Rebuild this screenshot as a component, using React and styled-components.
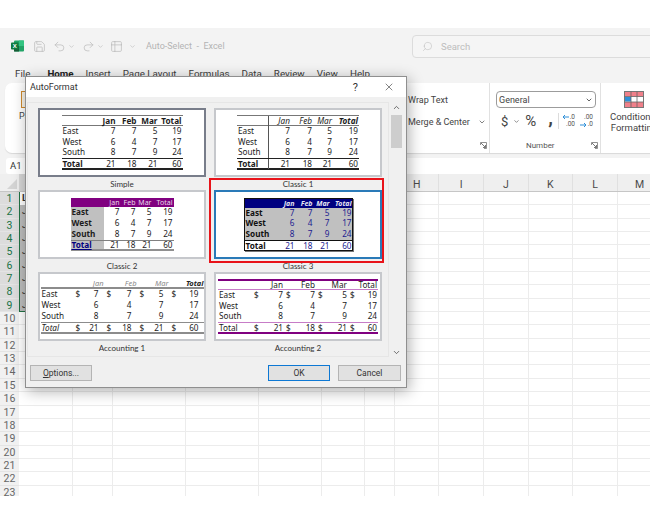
import styled, { createGlobalStyle, css } from 'styled-components';
import { Save, Undo2, Redo2, Table2, ChevronDown, ChevronUp, X, Search } from 'lucide-react';

const GlobalStyle = createGlobalStyle`
  html, body {
    margin: 0;
    padding: 0;
    background: #fff;
  }
  * {
    box-sizing: border-box;
  }
`;

const UI_FONT = `Roboto, "Open Sans", sans-serif`;

const Page = styled.div`
  position: relative;
  width: 650px;
  height: 524px;
  padding: 28px 0;
  overflow: hidden;
  font-family: ${UI_FONT};
  color: #333;
`;

const ExcelWindow = styled.div`
  height: 468px;
  background: #f3f3f3;
  display: flex;
  flex-direction: column;
  overflow: hidden;
`;

const TitleBar = styled.div`
  height: 36px;
  flex: none;
  display: flex;
  align-items: center;
  padding-left: 11px;
  color: #b9b9b9;
`;

const QuickIcon = styled.span`
  display: inline-flex;
  margin-left: ${(p) => p.$gap || 0}px;
`;

const DocTitle = styled.span`
  margin-left: 10px;
  font-size: 9px;
  color: #b4b4b4;
  white-space: pre;
`;

const SearchBox = styled.div`
  margin-left: auto;
  margin-right: -4px;
  width: 242px;
  height: 23px;
  border: 1px solid #dcdcdc;
  border-radius: 4px;
  display: flex;
  align-items: center;
  gap: 8px;
  padding-left: 9px;
  font-size: 9.5px;
  color: #bdbdbd;
  background: #f5f5f5;
`;

const SearchGlass = styled(Search)`
  transform: scaleX(-1);
`;

const TabRow = styled.div`
  height: 19px;
  flex: none;
  display: flex;
  align-items: center;
  gap: 12px;
  padding: 0 0 1px 15px;
  font-size: 9.8px;
`;

const Tab = styled.span`
  margin-left: ${(p) => (p.$active ? 5 : 0)}px;
  font-weight: ${(p) => (p.$active ? 700 : 400)};
  color: ${(p) => (p.$active ? '#222' : '#3c3c3c')};
  white-space: nowrap;
`;

const Ribbon = styled.div`
  height: 70px;
  flex: none;
  margin-left: 5px;
  margin-right: -12px;
  background: #fff;
  border-radius: 7px;
  display: grid;
  grid-template-columns: 396px 89px 111px 61px;
  box-shadow: 0 1px 1px #d9d9d9;
`;

const RibbonGroup = styled.div`
  display: flex;
  flex-direction: column;
  padding: 8px 2px 2px 7px;
  border-right: ${(p) => (p.$last ? 'none' : '1px solid #e1e1e1')};
  font-size: 9px;
  color: #444;
`;

const PasteButton = styled.div`
  display: flex;
  flex-direction: column;
  align-items: flex-start;
  gap: 3px;
  padding-left: 7px;
`;

const ClipboardShape = styled.div`
  width: 14px;
  height: 17px;
  margin-left: 2px;
  border: 1.5px solid #d08a2e;
  background: #f7f2e8;
`;

const CommandRow = styled.div`
  height: 18px;
  display: flex;
  align-items: center;
  gap: ${(p) => p.$gap || 0}px;
  margin-bottom: 4px;
  white-space: nowrap;
`;

const NumberRow = styled.div`
  height: 18px;
  margin-top: 4px;
  display: flex;
  align-items: center;
`;

const GroupFooter = styled.div`
  margin-top: auto;
  height: 12px;
  display: flex;
  align-items: center;
  justify-content: ${(p) => (p.$label ? 'space-between' : 'flex-end')};
  font-size: 8px;
  color: #555;
`;

const GroupLabel = styled.span`
  margin-left: 29px;
`;

const Combo = styled.div`
  width: 100px;
  height: 17px;
  margin-left: -1px;
  border: 1px solid #9c9c9c;
  border-radius: 4px;
  display: flex;
  align-items: center;
  justify-content: space-between;
  padding: 0 2px;
  font-size: 9px;
`;

const NumberButton = styled.span`
  margin-left: ${(p) => p.$ml || 0}px;
  font-size: ${(p) => p.$size || 12}px;
  font-weight: ${(p) => p.$weight || 400};
  color: #444;
  line-height: 1;
`;

const CommaButton = styled(NumberButton)`
  transform: translateY(-4px);
`;

const NumberChevron = styled(ChevronDown)`
  margin-left: 5px;
`;

const NumberDivider = styled.span`
  width: 1px;
  height: 16px;
  margin-left: 5px;
  background: #dcdcdc;
`;

const DecimalButton = styled.span`
  width: 12px;
  margin-left: ${(p) => p.$ml}px;
  display: flex;
  flex-direction: column;
  align-items: flex-end;
  font-size: 6.5px;
  line-height: 7.5px;
  color: #555;
`;

const DecimalLine = styled.span`
  display: flex;
  align-items: center;
  gap: 1px;
`;

const StylesLabel = styled.div`
  margin-top: 3px;
  text-align: center;
  font-size: 9.5px;
  line-height: 11px;
  white-space: nowrap;
`;

const StylesIcon = styled.div`
  display: flex;
  justify-content: center;
`;

const FormulaRow = styled.div`
  height: 16px;
  flex: none;
  margin-top: 5px;
  display: flex;
  gap: 4px;
  padding-left: 6px;
`;

const NameBox = styled.div`
  width: 80px;
  background: #fff;
  border-radius: 3px;
  font-size: 9.5px;
  line-height: 16px;
  padding-left: 4px;
`;

const FormulaInput = styled.div`
  flex: 1;
  background: #fff;
`;

const COLUMN_TRACKS = '19px 54px 40px 73px 73px 63px 43px 30px 44.4px 44.6px 44.6px 44.6px 44.6px 44.6px';

const ColumnHeader = styled.div`
  height: 18px;
  flex: none;
  display: grid;
  grid-template-columns: ${COLUMN_TRACKS};
  background: #efefef;
  border-bottom: 1px solid #c6c6c6;
`;

const CornerCell = styled.div`
  display: flex;
  align-items: flex-end;
  justify-content: flex-end;
  padding: 0 2px 2px 0;
  &::after {
    content: '';
    border-left: 10px solid transparent;
    border-bottom: 10px solid #d4d4d4;
  }
`;

const ColumnCell = styled.div`
  border-right: 1px solid #e0e0e0;
  background: ${(p) => (p.$selected ? '#d6d6d6' : 'transparent')};
  font-size: 10.5px;
  line-height: 10px;
  padding-top: 6px;
  text-align: center;
  color: #4a4a4a;
`;

const SheetGrid = styled.div`
  flex: 1;
  min-height: 0;
  overflow: hidden;
  display: grid;
  grid-template-columns: ${COLUMN_TRACKS};
  grid-auto-rows: 13.35px;
  background: #fff;
`;

const RowHeader = styled.div`
  background: ${(p) => (p.$selected ? '#dcdcdc' : '#f1f1f1')};
  color: ${(p) => (p.$selected ? '#217346' : '#666')};
  font-size: 10.5px;
  line-height: 13px;
  text-align: center;
  border-bottom: 1px solid #e4e4e4;
`;

const SheetCell = styled.div`
  border-right: 1px solid #ececec;
  border-bottom: 1px solid #ececec;
  font-size: 9.5px;
  line-height: 12px;
  padding-left: 2px;
  color: #333;
  ${(p) =>
    p.$selected &&
    css`
      background: ${p.$active ? '#fff' : '#bdbdbd'};
      border-left: 1px solid #217346;
      border-bottom: ${p.$end ? '1.5px solid #217346' : 'none'};
      font-weight: ${p.$active ? 700 : 400};
    `}
`;

const Dialog = styled.div`
  position: absolute;
  left: 25px;
  top: 76px;
  width: 382px;
  height: 312px;
  background: #f0f0f0;
  border: 1px solid #8f8f8f;
  box-shadow: 2px 3px 14px rgba(0, 0, 0, 0.32);
  display: flex;
  flex-direction: column;
`;

const DialogTitle = styled.div`
  height: 20px;
  flex: none;
  background: #fff;
  display: flex;
  align-items: center;
  padding: 0 11px 0 4px;
  font-size: 9px;
  color: #333;
`;

const DialogHelp = styled.span`
  margin-left: auto;
  margin-right: 25px;
  font-size: 11px;
`;

const DialogBody = styled.div`
  display: flex;
  padding: 5px 3px 0 1px;
`;

const FormatList = styled.div`
  width: 362px;
  height: 255px;
  border: 1px solid #e6e6e6;
  padding: 5px 0 0 10px;
  display: grid;
  grid-template-columns: 168px 168px;
  grid-auto-rows: 82px;
  column-gap: 8px;
`;

const FormatItem = styled.div`
  position: relative;
`;

const previewBorders = {
  selected: '#787d8a',
  focused: '#2a7ab8',
  normal: '#c6c8cc',
};

const PreviewBox = styled.div`
  height: 69px;
  background: #fff;
  border: 2px solid ${(p) => previewBorders[p.$state || 'normal']};
  display: flex;
  align-items: center;
  justify-content: center;
`;

const FormatName = styled.div`
  height: 13px;
  font-family: Lato, ${UI_FONT};
  font-size: 8px;
  line-height: 15px;
  text-align: center;
  color: #333;
`;

const RedMarker = styled.div`
  position: absolute;
  left: -5px;
  top: -12px;
  width: 175px;
  height: 85px;
  border: 2px solid #e8131a;
  pointer-events: none;
`;

const Scrollbar = styled.div`
  width: 14px;
  height: 255px;
  display: flex;
  flex-direction: column;
  align-items: center;
  color: #444;
  padding-top: 1px;
`;

const ScrollThumb = styled.div`
  width: 11px;
  height: 33px;
  margin-top: 3px;
  margin-bottom: auto;
  background: #cdcdcd;
`;

const DialogFooter = styled.div`
  display: flex;
  justify-content: space-between;
  padding: 8px 5px 0 4px;
`;

const FooterRight = styled.div`
  display: flex;
  gap: 8px;
`;

const DialogButton = styled.button`
  width: ${(p) => (p.$wide ? 63 : 62)}px;
  height: 16px;
  padding: 0;
  background: #e1e1e1;
  border: ${(p) => (p.$primary ? '1.5px solid #0d78d4' : '1px solid #b4b4b4')};
  font-family: ${UI_FONT};
  font-size: 8.5px;
  line-height: 13px;
  color: #333;
`;

const Underlined = styled.span`
  text-decoration: underline;
`;

const MiniTable = styled.div`
  width: ${(p) => p.$width}px;
  font-family: "Noto Sans", "Liberation Sans", sans-serif;
  font-size: 8.2px;
  color: #1c1c1c;
`;

const rowLooks = {
  simple: {
    head: css`
      font-weight: 700;
      border-top: 1px solid #777;
      border-bottom: 1px solid #777;
      height: 11px;
    `,
    body: css``,
    total: css`
      border-top: 1px solid #222;
      border-bottom: 2px solid #222;
      height: 12px;
      > :first-child {
        font-weight: 700;
      }
    `,
  },
  classic1: {
    head: css`
      font-style: italic;
      border-top: 1px solid #777;
      border-bottom: 1px solid #777;
      height: 11px;
      > :last-child {
        font-weight: 700;
      }
      > :first-child {
        border-right: 1px solid #555;
      }
    `,
    body: css`
      > :first-child {
        border-right: 1px solid #555;
      }
    `,
    total: css`
      border-top: 1px solid #222;
      border-bottom: 2px solid #222;
      height: 12px;
      > :first-child {
        font-weight: 700;
        border-right: 1px solid #555;
      }
    `,
  },
  classic2: {
    head: css`
      background: #800080;
      color: #e8d8e8;
      font-size: 7px;
      line-height: 9px;
      height: 9px;
    `,
    body: css`
      > :first-child {
        background: #c0c0c0;
        font-weight: 700;
      }
    `,
    total: css`
      border-top: 1.5px solid #808080;
      border-bottom: 2px solid #909090;
      height: 11px;
      line-height: 8px;
      > :first-child {
        background: #c0c0c0;
        color: #000080;
        font-weight: 700;
        text-decoration: underline;
      }
    `,
  },
  classic3: {
    head: css`
      background: #000080;
      color: #e6e6f5;
      font-size: 7px;
      line-height: 9px;
      font-style: italic;
      font-weight: 700;
      height: 9px;
    `,
    body: css`
      background: #c0c0c0;
      color: #1c1c90;
      > :first-child {
        color: #111;
        font-weight: 700;
      }
    `,
    total: css`
      border-top: 1.5px solid #111;
      height: 10.5px;
      line-height: 9px;
      color: #1c1c90;
      > :first-child {
        color: #111;
        font-weight: 700;
      }
    `,
  },
  accounting1: {
    head: css`
      color: #8a8a8a;
      font-size: 7.5px;
      font-style: italic;
      border-bottom: 2px solid #8c8c8c;
      height: 10px;
      line-height: 8px;
      > :last-child {
        color: #222;
        font-weight: 700;
      }
    `,
    body: css`
      > :not(:first-child) {
        padding: 0 5px 0 3px;
      }
    `,
    total: css`
      border-top: 1.5px solid #8c8c8c;
      border-bottom: 2px solid #8c8c8c;
      height: 12px;
      > :first-child {
        font-style: italic;
      }
      > :not(:first-child) {
        padding: 0 5px 0 3px;
      }
    `,
  },
  accounting2: {
    head: css`
      border-top: 2px solid #800080;
      border-bottom: 1px solid #c77cc7;
      height: 11px;
      line-height: 8px;
      > :not(:first-child) {
        padding-right: 1px;
      }
    `,
    body: css`
      > :not(:first-child) {
        padding: 0 1px 0 2px;
      }
    `,
    total: css`
      border-top: 1px solid #c77cc7;
      border-bottom: 2px solid #800080;
      height: 12px;
      > :not(:first-child) {
        padding: 0 1px 0 2px;
      }
    `,
  },
};

const MiniRow = styled.div`
  display: grid;
  grid-template-columns: ${(p) => p.$cols};
  height: 10.7px;
  line-height: 10px;
  align-items: stretch;
  ${(p) => rowLooks[p.$look][p.$kind]}
`;

const MiniLabel = styled.div`
  padding-left: 1px;
  white-space: nowrap;
`;

const MiniCell = styled.div`
  display: flex;
  justify-content: flex-end;
  white-space: nowrap;
`;

const Dollar = styled.span`
  margin-right: auto;
`;

const BoxedTable = styled(MiniTable)`
  border: 1px solid #111;
  box-shadow: 1px 1px 0 #777;
`;

const HEAD = ['Jan', 'Feb', 'Mar', 'Total'];
const ROWS = [
  ['East', 7, 7, 5, 19],
  ['West', 6, 4, 7, 17],
  ['South', 8, 7, 9, 24],
  ['Total', 21, 18, 21, 60],
];

const FORMATS = [
  { name: 'Simple', look: 'simple', width: 121, cols: '33px 21px 21px 21px 24px', state: 'selected' },
  { name: 'Classic 1', look: 'classic1', width: 122, cols: '32px 21px 22px 20px 26px' },
  { name: 'Classic 2', look: 'classic2', width: 103, cols: '33px 16px 16px 16px 21px' },
  { name: 'Classic 3', look: 'classic3', width: 109, cols: '34px 16px 18px 17px 22px', state: 'focused', marked: true, boxed: true },
  { name: 'Accounting 1', look: 'accounting1', width: 163, cols: '32px 31px 33px 32px 35px', money: true },
  { name: 'Accounting 2', look: 'accounting2', width: 160, cols: '34px 32px 32px 32px 30px', money: true },
];

const COLUMNS = ['A', 'B', 'C', 'D', 'E', 'F', 'G', 'H', 'I', 'J', 'K', 'L', 'M'];
const SHEET_ROWS = Array.from({ length: 23 }, (_, i) => i + 1);

function FormatPreview({ look, width, cols, money, boxed }) {
  const Wrapper = boxed ? BoxedTable : MiniTable;
  return (
    <Wrapper $width={width}>
      <MiniRow $look={look} $kind="head" $cols={cols}>
        <MiniLabel />
        {HEAD.map((h) => (
          <MiniCell key={h}>{h}</MiniCell>
        ))}
      </MiniRow>
      {ROWS.map(([label, ...values], i) => (
        <MiniRow key={label} $look={look} $kind={i === 3 ? 'total' : 'body'} $cols={cols}>
          <MiniLabel>{label}</MiniLabel>
          {values.map((v, j) => (
            <MiniCell key={j}>
              {money && (i === 0 || i === 3) && <Dollar>$</Dollar>}
              {v}
            </MiniCell>
          ))}
        </MiniRow>
      ))}
    </Wrapper>
  );
}

function RowCells({ row }) {
  const selected = row <= 9;
  return (
    <>
      <RowHeader $selected={selected}>{row}</RowHeader>
      {COLUMNS.map((c) => {
        const inSelection = selected && c === 'A';
        return (
          <SheetCell key={c} $selected={inSelection} $active={row === 1} $end={row === 9}>
            {inSelection ? (row === 1 ? 'L' : 'J') : ''}
          </SheetCell>
        );
      })}
    </>
  );
}

function ExcelLogo() {
  return (
    <svg width="13" height="12" viewBox="0 0 13 12">
      <rect x="3" y="0.5" width="10" height="11" rx="1" fill="#21a366" />
      <rect x="8" y="0.5" width="5" height="5.5" fill="#33c481" />
      <rect x="3" y="6" width="5" height="5.5" fill="#185c37" />
      <rect x="0" y="2.5" width="7.5" height="7" rx="0.8" fill="#107c41" />
      <text x="3.7" y="8" fontSize="6" fontWeight="700" fill="#fff" textAnchor="middle" fontFamily="Liberation Sans">
        X
      </text>
    </svg>
  );
}

function ConditionalIcon() {
  return (
    <svg width="20" height="17" viewBox="0 0 20 17">
      <rect x="0.5" y="0.5" width="19" height="16" fill="#fff" stroke="#777" />
      <rect x="1" y="1" width="18" height="4.5" fill="#f0808a" />
      <rect x="1" y="11" width="18" height="5" fill="#f0808a" />
      <rect x="1" y="6" width="6" height="4.5" fill="#2e8fd8" />
      <path d="M7 .5v16M13 .5v16M.5 5.5h19M.5 11h19" stroke="#666" strokeWidth="0.8" fill="none" />
    </svg>
  );
}

function Launcher() {
  return (
    <svg width="7" height="7" viewBox="0 0 7 7">
      <path d="M.5 3V.5H6.500V6.500H4" fill="none" stroke="#777" strokeWidth="0.8" />
      <path d="M1 1l4.500 4.500M5.500 3v2.500H3" fill="none" stroke="#555" strokeWidth="0.8" />
    </svg>
  );
}

function DecimalArrow({ left }) {
  return (
    <svg width="7" height="6" viewBox="0 0 7 6">
      <path
        d={left ? 'M7 3H1M3 1L1 3l2 2' : 'M0 3h6M4 1l2 2-2 2'}
        fill="none"
        stroke="#2e8fd8"
        strokeWidth="1"
      />
    </svg>
  );
}

export default function App() {
  return (
    <Page>
      <GlobalStyle />
      <ExcelWindow>
        <TitleBar>
          <ExcelLogo />
          <QuickIcon $gap={9}>
            <Save size={13} strokeWidth={1.3} />
          </QuickIcon>
          <QuickIcon $gap={7}>
            <Undo2 size={13} strokeWidth={1.3} />
          </QuickIcon>
          <QuickIcon $gap={2}>
            <ChevronDown size={7} />
          </QuickIcon>
          <QuickIcon $gap={7}>
            <Redo2 size={13} strokeWidth={1.3} />
          </QuickIcon>
          <QuickIcon $gap={2}>
            <ChevronDown size={7} />
          </QuickIcon>
          <QuickIcon $gap={6}>
            <Table2 size={13} strokeWidth={1.3} />
          </QuickIcon>
          <QuickIcon $gap={6}>
            <ChevronDown size={7} />
          </QuickIcon>
          <DocTitle>Auto-Select  -  Excel</DocTitle>
          <SearchBox>
            <SearchGlass size={11} strokeWidth={1.2} />
            Search
          </SearchBox>
        </TitleBar>
        <TabRow>
          <Tab>File</Tab>
          <Tab $active>Home</Tab>
          <Tab>Insert</Tab>
          <Tab>Page Layout</Tab>
          <Tab>Formulas</Tab>
          <Tab>Data</Tab>
          <Tab>Review</Tab>
          <Tab>View</Tab>
          <Tab>Help</Tab>
        </TabRow>
        <Ribbon>
          <RibbonGroup>
            <PasteButton>
              <ClipboardShape />
              Pa
            </PasteButton>
          </RibbonGroup>
          <RibbonGroup>
            <CommandRow>Wrap Text</CommandRow>
            <CommandRow $gap={8}>
              Merge &amp; Center
              <ChevronDown size={8} />
            </CommandRow>
            <GroupFooter>
              <Launcher />
            </GroupFooter>
          </RibbonGroup>
          <RibbonGroup>
            <Combo>
              General
              <ChevronDown size={8} strokeWidth={2.5} />
            </Combo>
            <NumberRow>
              <NumberButton $size={13} $ml={4}>$</NumberButton>
              <NumberChevron size={7} />
              <NumberButton $size={15} $ml={5}>%</NumberButton>
              <CommaButton $size={19} $weight={700} $ml={12}>,</CommaButton>
              <NumberDivider />
              <DecimalButton $ml={4}>
                <DecimalLine>
                  <DecimalArrow left />
                  .0
                </DecimalLine>
                .00
              </DecimalButton>
              <DecimalButton $ml={6}>
                .00
                <DecimalLine>
                  <DecimalArrow />
                  .0
                </DecimalLine>
              </DecimalButton>
            </NumberRow>
            <GroupFooter $label>
              <GroupLabel>Number</GroupLabel>
              <Launcher />
            </GroupFooter>
          </RibbonGroup>
          <RibbonGroup $last>
            <StylesIcon>
              <ConditionalIcon />
            </StylesIcon>
            <StylesLabel>
              Conditional
              <br />
              Formatting
            </StylesLabel>
          </RibbonGroup>
        </Ribbon>
        <FormulaRow>
          <NameBox>A1</NameBox>
          <FormulaInput />
        </FormulaRow>
        <ColumnHeader>
          <CornerCell />
          {COLUMNS.map((c) => (
            <ColumnCell key={c} $selected={c === 'A'}>
              {c}
            </ColumnCell>
          ))}
        </ColumnHeader>
        <SheetGrid>
          {SHEET_ROWS.map((r) => (
            <RowCells key={r} row={r} />
          ))}
        </SheetGrid>
      </ExcelWindow>

      <Dialog>
        <DialogTitle>
          AutoFormat
          <DialogHelp>?</DialogHelp>
          <X size={12} strokeWidth={1.2} />
        </DialogTitle>
        <DialogBody>
          <FormatList>
            {FORMATS.map((f) => (
              <FormatItem key={f.name}>
                <PreviewBox $state={f.state}>
                  <FormatPreview look={f.look} width={f.width} cols={f.cols} money={f.money} boxed={f.boxed} />
                </PreviewBox>
                <FormatName>{f.name}</FormatName>
                {f.marked && <RedMarker />}
              </FormatItem>
            ))}
          </FormatList>
          <Scrollbar>
            <ChevronUp size={9} strokeWidth={2} />
            <ScrollThumb />
            <ChevronDown size={9} strokeWidth={2} />
          </Scrollbar>
        </DialogBody>
        <DialogFooter>
          <DialogButton>
            <Underlined>O</Underlined>ptions...
          </DialogButton>
          <FooterRight>
            <DialogButton $primary>OK</DialogButton>
            <DialogButton $wide>Cancel</DialogButton>
          </FooterRight>
        </DialogFooter>
      </Dialog>
    </Page>
  );
}
